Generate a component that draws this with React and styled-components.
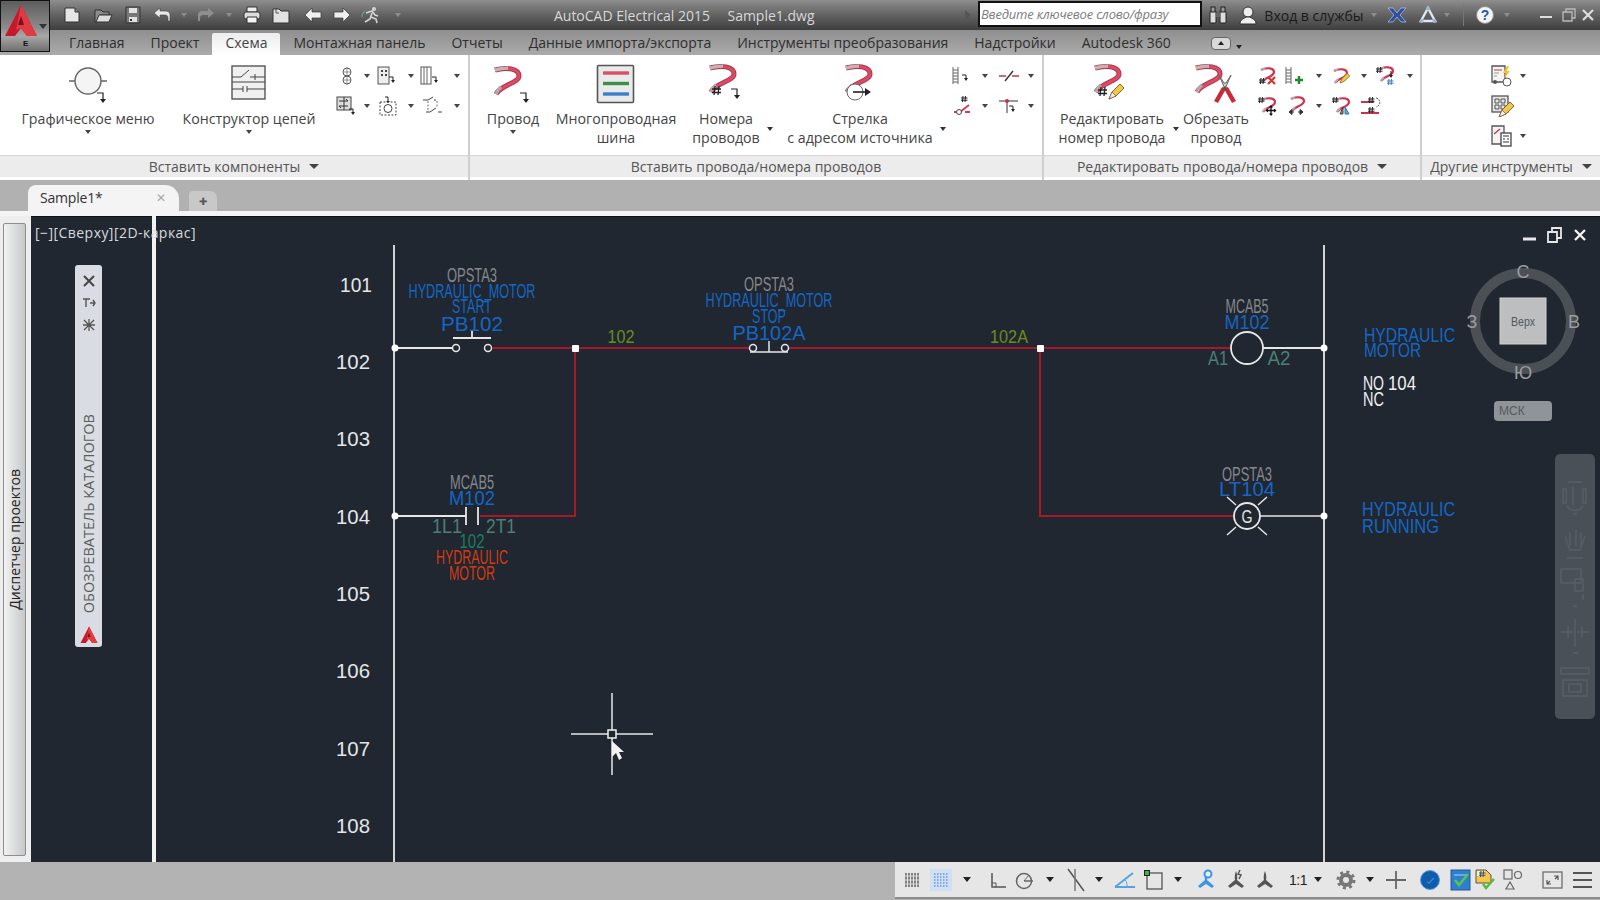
import styled, { createGlobalStyle } from "styled-components";

const GlobalStyle = createGlobalStyle`
  html, body {
    margin: 0;
    padding: 0;
    overflow: hidden;
    background: #b0b0b0;
    font-family: "Open Sans", "Liberation Sans", sans-serif;
  }
`;

// lays items out in flow, each centred on the x it is given
const Track = ({ origin = 0, items, height }) => {
  let cursor = origin;
  return (
    <TrackRow $h={height}>
      {items.map(([x, w, node], i) => {
        const gap = x - w / 2 - cursor;
        cursor = x + w / 2;
        return (
          <Slot key={i} $w={w} $gap={gap}>
            {node}
          </Slot>
        );
      })}
    </TrackRow>
  );
};

const Svg = ({ w = 20, h = 20, children }) => (
  <svg width={w} height={h} viewBox={`0 0 ${w} ${h}`} fill="none">
    {children}
  </svg>
);

/* ---------- quick access icons ---------- */
const QNew = () => (
  <Svg>
    <path d="M3 3h10l4 4v10H3z" fill="#e6e6e6" stroke="#333" />
    <path d="M13 3v4h4" fill="#888" stroke="#333" />
  </Svg>
);
const QOpen = () => (
  <Svg>
    <path d="M2 5h6l2 2h6v3H7l-3 7H2z" fill="#8d8d8d" stroke="#333" />
    <path d="M6 10h13l-3 7H3z" fill="#ddd" stroke="#333" />
  </Svg>
);
const QSave = () => (
  <Svg>
    <path d="M3 2h14v16H3z" fill="#777" stroke="#333" />
    <path d="M6 3h8v5H6z" fill="#e2e2e2" />
    <path d="M6 12h8v5H6z" fill="#e2e2e2" />
    <path d="M7 14h2v2H7z" fill="#333" />
  </Svg>
);
const QUndo = ({ dim }) => (
  <Svg>
    <path
      d="M8 3 2 8l6 5v-3h5c2 0 3 1 3 3v3h2V10c0-3-2-4-5-4H8z"
      fill={dim ? "#8e8e8e" : "#e8e8e8"}
      stroke="#444"
      strokeWidth=".6"
    />
  </Svg>
);
const QRedo = () => (
  <Svg>
    <path
      d="M12 3l6 5-6 5v-3H7c-2 0-3 1-3 3v3H2V10c0-3 2-4 5-4h5z"
      fill="#8e8e8e"
    />
  </Svg>
);
const QPrint = () => (
  <Svg>
    <path d="M5 2h10v5H5z" fill="#eee" stroke="#333" />
    <rect x="2" y="7" width="16" height="7" rx="2" fill="#ddd" stroke="#333" />
    <path d="M5 12h10v6H5z" fill="#f3f3f3" stroke="#333" />
  </Svg>
);
const QSheet = () => (
  <Svg>
    <path d="M2 4h6l2 2h8v12H2z" fill="#e2e2e2" stroke="#333" />
    <path d="M5 4v4h3" stroke="#555" />
  </Svg>
);
const QArrow = ({ flip }) => (
  <Svg>
    <path
      d={flip ? "M18 10l-7-7v4H2v6h9v4z" : "M2 10l7-7v4h9v6H9v4z"}
      fill="#efefef"
      stroke="#333"
      strokeWidth=".7"
    />
  </Svg>
);
const QRun = () => (
  <Svg>
    <circle cx="13" cy="4" r="2" fill="#d5d5d5" />
    <path d="M5 8l6-2 3 4 3 1M11 8l-2 6-5 3M10 12l5 2 1 4" stroke="#d5d5d5" strokeWidth="1.6" />
    <path d="M1 12a7 7 0 0 1 3-6" stroke="#5c9a7a" strokeWidth="1.5" />
  </Svg>
);

/* ---------- right side of title bar ---------- */
const Binoculars = () => (
  <Svg>
    <rect x="2" y="6" width="6" height="12" rx="1" fill="#ddd" stroke="#222" />
    <rect x="12" y="6" width="6" height="12" rx="1" fill="#ddd" stroke="#222" />
    <rect x="3" y="2" width="4" height="5" fill="#999" stroke="#222" />
    <rect x="13" y="2" width="4" height="5" fill="#999" stroke="#222" />
    <rect x="8" y="8" width="4" height="4" fill="#666" />
  </Svg>
);
const User = () => (
  <Svg>
    <circle cx="10" cy="7" r="5" fill="#eee" stroke="#333" />
    <path d="M2 19c0-5 4-5 6-7h4c2 2 6 2 6 7z" fill="#eee" stroke="#333" />
  </Svg>
);
const XLogo = () => (
  <Svg>
    <path d="M1 3h5l4 5 4-5h5l-6 7 6 7h-5l-4-5-4 5H1l6-7z" fill="#2d4f9e" stroke="#b8c7e6" strokeWidth=".7" />
  </Svg>
);
const A360 = () => (
  <Svg>
    <path d="M10 3l7 13H3z" stroke="#dfe6ee" strokeWidth="2.4" />
    <circle cx="10" cy="3.5" r="2" fill="#9fb4ce" />
    <circle cx="3.5" cy="16" r="2" fill="#9fb4ce" />
    <circle cx="16.5" cy="16" r="2" fill="#9fb4ce" />
  </Svg>
);

/* ---------- ribbon helpers ---------- */
const BentArrow = ({ x, y }) => (
  <g transform={`translate(${x} ${y})`}>
    <path d="M0 0h6v6" stroke="#222" strokeWidth="1.2" />
    <path d="M3 6h6L6 10z" fill="#222" />
  </g>
);

const wireBig = "M3 4C13 1 27 2 27 10C27 17 9 19 4 28";

const BigWire = () => (
  <g>
    <path d={wireBig} stroke="#a83a4d" strokeWidth="5" />
    <path d={wireBig} stroke="#dd4a66" strokeWidth="3" />
    <path d="M3 4C8 2.6 12 2 16 2.2" stroke="#c8b0b5" strokeWidth="3.4" />
    <path d="M9 21C6 23 5 26 4 28" stroke="#b9a6aa" strokeWidth="3.4" />
  </g>
);

const GraphicMenuIcon = () => (
  <Svg w={44} h={42}>
    <circle cx="22" cy="18" r="13" fill="#f4f4f4" stroke="#666" strokeWidth="1.4" />
    <path d="M3 18h6M35 18h6" stroke="#666" strokeWidth="1.4" />
    <BentArrow x={31} y={30} />
  </Svg>
);
const CircuitIcon = () => (
  <Svg w={36} h={38}>
    <rect x="1" y="1" width="33" height="33" fill="#f0f0f0" stroke="#555" strokeWidth="1.4" />
    <path d="M1 12h9l8-7M19 12h15M24 9v6M1 24h11M12 21v6M16 21v6M16 24h18M1 17h33" stroke="#444" />
  </Svg>
);
const WireIcon = () => (
  <Svg w={40} h={42}>
    <g transform="translate(-1 3)">
      <BigWire />
    </g>
    <BentArrow x={27} y={30} />
  </Svg>
);
const BusIcon = () => (
  <Svg w={40} h={40}>
    <rect x="1.5" y="1.5" width="36" height="37" rx="1" fill="#eaeaea" stroke="#555" strokeWidth="1.6" />
    <path d="M7 9h26" stroke="#d9506a" strokeWidth="3.4" />
    <path d="M7 19.5h26" stroke="#3c8f46" strokeWidth="3.4" />
    <path d="M7 30h26" stroke="#3b7ec9" strokeWidth="3.4" />
  </Svg>
);
const Hash = ({ x, y, c = "#222" }) => (
  <g transform={`translate(${x} ${y})`} stroke={c} strokeWidth="1.3">
    <path d="M3 0 2 9M7 0 6 9M0 3h9M0 6.500h9" />
  </g>
);
const NumberIcon = () => (
  <Svg w={46} h={42}>
    <g transform="translate(4 1)">
      <BigWire />
    </g>
    <Hash x={9} y={23} />
    <BentArrow x={28} y={26} />
  </Svg>
);
const SourceIcon = () => (
  <Svg w={46} h={42}>
    <g transform="translate(6 1)">
      <BigWire />
    </g>
    <circle cx="18" cy="29" r="8" fill="#fff" stroke="#666" />
    <path d="M16 29h14" stroke="#222" strokeWidth="1.6" />
    <path d="M28 25l6 4-6 4z" fill="#222" />
  </Svg>
);
const Pencil = ({ x, y }) => (
  <g transform={`translate(${x} ${y})`}>
    <path d="M0 14 3 7 11-1l4 4-8 8z" fill="#f1c84b" stroke="#5d4a16" strokeWidth=".8" />
    <path d="M0 14l3-7 4 4z" fill="#eee" stroke="#5d4a16" strokeWidth=".6" />
  </g>
);
const EditNumberIcon = () => (
  <Svg w={46} h={42}>
    <g transform="translate(3 1)">
      <BigWire />
    </g>
    <Hash x={9} y={24} />
    <Pencil x={20} y={22} />
  </Svg>
);
const TrimIcon = () => (
  <Svg w={46} h={42}>
    <g transform="translate(0 1)">
      <BigWire />
    </g>
    <path d="M26 12l6 14 6-14-5 8h-2z" fill="#cfcfcf" stroke="#666" />
    <path d="M31 25l-8 14M33 25l8 14" stroke="#c72b35" strokeWidth="4.500" />
    <circle cx="32" cy="25" r="1.800" fill="#555" />
  </Svg>
);

const miniWire = "M2 4C7 1 15 2 15 6C15 11 6 11 3 16";
const MiniWire = ({ x = 0, y = 0 }) => (
  <g transform={`translate(${x} ${y})`}>
    <path d={miniWire} stroke="#cf3553" strokeWidth="2.2" />
    <path d="M2 4 6 2.500M6 12 3 16" stroke="#b9a6aa" strokeWidth="2" />
  </g>
);
const MiniHash = ({ x, y, c = "#222" }) => (
  <g transform={`translate(${x} ${y})`} stroke={c} strokeWidth="1">
    <path d="M2 0 1.500 6M4.500 0 4 6M0 2h6.500M0 4.200h6.500" />
  </g>
);
const SmallArrow = ({ x, y }) => (
  <g transform={`translate(${x} ${y})`}>
    <path d="M0 0h4v3" stroke="#222" />
    <path d="M2 3h4L4 6z" fill="#222" />
  </g>
);
const Ladder = ({ x = 0 }) => (
  <g transform={`translate(${x} 0)`} stroke="#666">
    <path d="M2 1v17M7 1v17M2 4h5M2 7h5M2 10h5M2 13h5M2 16h5" />
  </g>
);

const S1 = () => (
  <Svg>
    <circle cx="10" cy="6" r="4" stroke="#555" />
    <circle cx="10" cy="14" r="4" stroke="#555" />
    <path d="M10 1v18M7 6h6M7 14h6" stroke="#777" strokeWidth=".8" />
  </Svg>
);
const S2 = () => (
  <Svg w={22}>
    <rect x="2" y="1" width="11" height="17" fill="#eee" stroke="#555" />
    <path d="M5 4h2v2H5zM9 4h2v2H9zM5 8h2v2H5zM9 8h2v2H9z" fill="#444" />
    <SmallArrow x={13} y={11} />
  </Svg>
);
const S3 = () => (
  <Svg w={22}>
    <rect x="2" y="1" width="10" height="17" fill="#fff" stroke="#555" />
    <path d="M5 1v17M8 1v17" stroke="#666" />
    <SmallArrow x={13} y={11} />
  </Svg>
);
const S4 = () => (
  <Svg w={22}>
    <rect x="1" y="1" width="14" height="13" fill="#ddd" stroke="#444" />
    <path d="M3 5h9M12 5l-2-2M3 10h9M3 10l2 2M8 1v13" stroke="#333" />
    <SmallArrow x={13} y={13} />
  </Svg>
);
const S5 = () => (
  <Svg w={22}>
    <rect x="2" y="6" width="16" height="13" stroke="#444" strokeDasharray="2 1.500" />
    <circle cx="10" cy="12.500" r="4" stroke="#444" />
    <path d="M7 1h3v4" stroke="#222" />
    <path d="M8 5h4l-2 2z" fill="#222" />
  </Svg>
);
const S6 = () => (
  <Svg w={22}>
    <path d="M1 4h5l5-3M12 4h2M4 16h4l6-4M16 16h4" stroke="#444" />
    <path d="M6 5v9" stroke="#777" strokeDasharray="2 1.500" />
    <path d="M15 5v7" stroke="#777" strokeDasharray="2 1.500" />
  </Svg>
);
const S7 = () => (
  <Svg w={22}>
    <Ladder />
    <SmallArrow x={11} y={9} />
  </Svg>
);
const S8 = () => (
  <Svg w={22}>
    <path d="M1 10h7M14 10h7" stroke="#c8324c" strokeWidth="1.6" />
    <path d="M7 15 15 5" stroke="#333" strokeWidth="1.4" />
  </Svg>
);
const S9 = () => (
  <Svg w={22}>
    <MiniHash x={8} y={0} />
    <path d="M1 16h6l9-7M12 16h5" stroke="#d23b55" strokeWidth="1.8" />
    <circle cx="6" cy="16" r="2.500" fill="#fff" stroke="#444" />
  </Svg>
);
const S10 = () => (
  <Svg w={22}>
    <path d="M1 5h19" stroke="#333" />
    <path d="M9 5v12" stroke="#333" />
    <circle cx="9" cy="5" r="2" fill="#c8324c" />
    <SmallArrow x={11} y={10} />
  </Svg>
);
const W1 = () => (
  <Svg w={22}>
    <MiniWire x={2} />
    <MiniHash x={2} y={12} />
    <path d="M11 11l7 7M18 11l-7 7" stroke="#d8342f" strokeWidth="2.200" />
  </Svg>
);
const W2 = () => (
  <Svg w={24}>
    <Ladder />
    <path d="M15 10v8M11 14h8" stroke="#1f8a2e" strokeWidth="2.400" />
  </Svg>
);
const W3 = () => (
  <Svg w={22}>
    <MiniWire x={1} y={1} />
    <g transform="translate(9 8)scale(.65)">
      <path d="M0 14 3 7 11-1l4 4-8 8z" fill="#f1c84b" stroke="#5d4a16" />
    </g>
  </Svg>
);
const W4 = () => (
  <Svg w={24}>
    <MiniWire x={3} y={-1} />
    <MiniHash x={1} y={1} />
    <MiniHash x={12} y={13} c="#3d7eb8" />
    <path d="M16 5v5" stroke="#222" />
    <path d="M14 9h4l-2 3z" fill="#222" />
  </Svg>
);
const W5 = () => (
  <Svg w={22}>
    <MiniWire x={3} />
    <MiniHash x={1} y={1} />
    <path d="M14 10v9M9.500 14.500h9" stroke="#111" strokeWidth="1.300" />
    <path d="M14 9l-2 2.500h4zM14 20l-2-2.500h4zM8.500 14.500l2.500-2v4zM19.500 14.500l-2.500-2v4z" fill="#111" />
  </Svg>
);
const W6 = () => (
  <Svg w={24}>
    <MiniWire x={3} y={-1} />
    <path d="M3 16h5M3 16l3-2.500v5zM12 16h5M17 16l-3-2.500v5z" fill="#333" stroke="#333" />
  </Svg>
);
const W7 = () => (
  <Svg w={22}>
    <MiniWire x={3} />
    <MiniHash x={1} y={1} />
    <path d="M9 18l3-7v7z" fill="#888" stroke="#444" />
    <path d="M14 11v7h4z" fill="#5fa8dc" stroke="#2c77b0" />
  </Svg>
);
const W8 = () => (
  <Svg w={24}>
    <path d="M1 6h13M1 17h18" stroke="#c8324c" strokeWidth="1.800" />
    <MiniHash x={8} y={1} />
    <MiniHash x={8} y={11} />
    <path d="M16 2c5 1 5 8 0 9" stroke="#555" strokeDasharray="2 1" />
  </Svg>
);
const O1 = () => (
  <Svg w={24} h={22}>
    <path d="M2 1h13v16H2z" fill="#f4f4f4" stroke="#555" strokeWidth="1.300" />
    <path d="M4 5h8" stroke="#c8324c" />
    <path d="M4 8h5M4 11h3" stroke="#999" />
    <path d="M17 1l-4 7h3l-2 6 6-8h-3l2-5z" fill="#f2c230" />
    <circle cx="17" cy="17" r="4" fill="#fff" stroke="#555" />
    <circle cx="5" cy="17" r="2" fill="#555" />
  </Svg>
);
const O2 = () => (
  <Svg w={24} h={22}>
    <rect x="2" y="1" width="16" height="16" fill="#e6e6e6" stroke="#555" strokeWidth="1.300" />
    <path d="M5 4h4v4H5zM11 4h4v4h-4zM5 10h4v4H5zM11 10h4v4h-4z" stroke="#555" />
    <Pencil x={9} y={8} />
  </Svg>
);
const O3 = () => (
  <Svg w={24} h={22}>
    <path d="M2 1h12v18H2z" fill="#f4f4f4" stroke="#555" strokeWidth="1.300" />
    <path d="M4 9 10 4" stroke="#c8324c" strokeWidth="1.400" />
    <rect x="11" y="8" width="10" height="13" fill="#fff" stroke="#444" strokeWidth="1.300" />
    <path d="M13 11h6M13 14h2M17 14h2M13 17h6" stroke="#333" />
  </Svg>
);

/* ---------- status bar icons ---------- */
const Blade = ({ c }) => (
  <g fill={c}>
    <path d="M10 2c1.500 4 1.500 7 1 9l7 6-2 2-6-4-6 4-2-2 7-6c-.500-2-.500-5 1-9z" />
  </g>
);
const StGrid = () => (
  <Svg w={22}>
    <path d="M5 3v14M8 3v14M11 3v14M14 3v14M17 3v14" stroke="#555" strokeWidth="1.400" />
    <path d="M3 6h16M3 10h16M3 14h16" stroke="#ddd" />
  </Svg>
);
const StSnap = () => (
  <SnapBox>
    <Svg w={18} h={18}>
      <path
        d="M2 3h14M2 6h14M2 9h14M2 12h14M2 15h14"
        stroke="#6c95d8"
        strokeWidth="1.400"
        strokeDasharray="1.500 1.500"
      />
    </Svg>
  </SnapBox>
);
const StOrtho = () => (
  <Svg w={22}>
    <path d="M5 3v14h14" stroke="#555" strokeWidth="1.500" />
    <path d="M5 13h4v4" stroke="#555" />
  </Svg>
);
const StPolar = () => (
  <Svg w={22}>
    <circle cx="10" cy="11" r="7.500" stroke="#666" strokeWidth="1.500" />
    <path d="M10 11h9" stroke="#666" strokeWidth="1.500" />
    <path d="M10 11 15 5" stroke="#666" />
  </Svg>
);
const StOsnap = () => (
  <Svg w={24} h={24}>
    <path d="M4 1l16 22" stroke="#555" strokeWidth="1.500" />
    <path d="M11 1v22" stroke="#777" strokeWidth="1.500" />
  </Svg>
);
const StAngle = () => (
  <Svg w={24} h={22}>
    <path d="M2 18h20M2 18 20 4" stroke="#58a2e0" strokeWidth="2" />
    <path d="M12 11c2 2 2 4 2 7" stroke="#58a2e0" />
  </Svg>
);
const StSquare = () => (
  <Svg w={22} h={22}>
    <rect x="4" y="4" width="15" height="16" stroke="#555" strokeWidth="1.300" />
    <rect x="1.500" y="1.500" width="5" height="5" fill="#3cb24a" stroke="#222" />
  </Svg>
);
const StAnno = () => (
  <Svg w={22} h={22}>
    <Blade c="#3d95e6" />
    <circle cx="12" cy="5" r="3.500" fill="#eee" stroke="#3d95e6" strokeWidth="2" />
  </Svg>
);
const StAnno2 = () => (
  <Svg w={22} h={22}>
    <Blade c="#555" />
    <path d="M14 1l-2 4 3 1-2 4" stroke="#555" strokeWidth="1.500" />
  </Svg>
);
const StAnno3 = () => (
  <Svg w={22} h={22}>
    <Blade c="#555" />
  </Svg>
);
const StGear = () => (
  <Svg w={20} h={20}>
    <circle cx="10" cy="10" r="5" stroke="#777" strokeWidth="4" />
    <circle cx="10" cy="10" r="8" stroke="#777" strokeWidth="3" strokeDasharray="3 3.300" />
  </Svg>
);
const StPlus = () => (
  <Svg w={22} h={22}>
    <path d="M11 2v18M1 11h20" stroke="#666" strokeWidth="1.800" />
  </Svg>
);
const StGlobe = () => (
  <Svg w={22} h={22}>
    <circle cx="11" cy="11" r="9.500" fill="#0f5cad" stroke="#5f9bd8" />
    <path d="M8 13l2 1 5-5" stroke="#3f8ad6" strokeWidth="1.200" />
  </Svg>
);
const StCheck = () => (
  <Svg w={22} h={22}>
    <rect x="1" y="1" width="19" height="20" fill="#2f7fd0" stroke="#1f5a9a" />
    <path d="M4 6h12" stroke="#a9d0f2" />
    <path d="M5 11l4 5 9-11" stroke="#5bc24c" strokeWidth="2.600" />
  </Svg>
);
const StDoc = () => (
  <Svg w={22} h={22}>
    <path d="M2 1h10l5 5v8H2z" fill="#f1c84b" stroke="#555" />
    <path d="M3 2h8v5H3z" fill="#eee" />
    <MiniHash x={5} y={2} c="#444" />
    <path d="M9 15l3 4 8-9" stroke="#5bb83c" strokeWidth="2.400" />
  </Svg>
);
const StShapes = () => (
  <Svg w={22} h={22}>
    <rect x="2" y="1" width="8" height="9" stroke="#666" strokeWidth="1.200" />
    <circle cx="16" cy="6" r="3.500" stroke="#666" strokeWidth="1.200" />
    <path d="M8 13l4 7H4z" stroke="#666" strokeWidth="1.200" />
  </Svg>
);
const StExpand = () => (
  <Svg w={22} h={20}>
    <rect x="1" y="2" width="19" height="16" stroke="#777" strokeWidth="1.400" />
    <path d="M5 14l3-3M5 10v4h4M16 6l-3 3M12 6h4v4" stroke="#555" strokeWidth="1.200" />
  </Svg>
);
const StMenu = () => (
  <Svg w={22} h={20}>
    <path d="M1 3h19M1 10h19M1 17h19" stroke="#555" strokeWidth="2" />
  </Svg>
);

/* ---------- the drawing ---------- */
const CadLabel = ({ x, y, w, h = 14, c = "#8d9093", anchor = "middle", children }) => (
  <CadText
    x={x}
    y={y + h / 2}
    fontSize={h / 0.72}
    textAnchor={anchor}
    textLength={w}
    lengthAdjust="spacingAndGlyphs"
    fill={c}
  >
    {children}
  </CadText>
);

const RED = "#a8182b";
const RAIL = "#e6e6e6";
const BLUE = "#1566c4";
const GREY = "#85888c";
const TEAL = "#4c7f76";

const rungs = [
  ["101", 356, 284, 32],
  ["102", 353, 361, 34],
  ["103", 353, 438, 34],
  ["104", 353, 516, 34],
  ["105", 353, 593, 34],
  ["106", 353, 670, 34],
  ["107", 353, 748, 34],
  ["108", 353, 825, 34],
];

const Drawing = () => (
  <DrawingSvg viewBox="31 216 1569 646" width="1569" height="646" fill="none">
    <path d="M394 245V862M1324 245V862" stroke={RAIL} strokeWidth="1.800" />
    {rungs.map(([t, x, y, w]) => (
      <CadLabel key={t} x={x} y={y} w={w} h={15} c="#e4e6e8">
        {t}
      </CadLabel>
    ))}

    <path d="M395 348H452M491 338H453M472 338V331" stroke={RAIL} strokeWidth="1.800" />
    <circle cx="456" cy="348" r="3.500" stroke={RAIL} strokeWidth="1.500" />
    <circle cx="488" cy="348" r="3.500" stroke={RAIL} strokeWidth="1.500" />
    <path d="M492 348H749M789 348H1231M575 348V516H480M1040 348V516H1235" stroke={RED} strokeWidth="2" />
    <circle cx="753" cy="348" r="3.500" stroke={RAIL} strokeWidth="1.500" />
    <circle cx="785" cy="348" r="3.500" stroke={RAIL} strokeWidth="1.500" />
    <path d="M750 352H788M769 341V352" stroke={RAIL} strokeWidth="1.500" />

    <CadLabel x={472} y={274} w={50} h={15} c={GREY}>OPSTA3</CadLabel>
    <CadLabel x={472} y={291} w={127} h={14} c={BLUE}>HYDRAULIC_MOTOR</CadLabel>
    <CadLabel x={472} y={306} w={40} h={14} c={BLUE}>START</CadLabel>
    <CadLabel x={472} y={323} w={62} h={15} c={BLUE}>PB102</CadLabel>
    <CadLabel x={621} y={336} w={27} h={13} c="#6f8a22">102</CadLabel>

    <CadLabel x={769} y={283} w={50} h={15} c={GREY}>OPSTA3</CadLabel>
    <CadLabel x={769} y={300} w={127} h={14} c={BLUE}>HYDRAULIC_MOTOR</CadLabel>
    <CadLabel x={769} y={316} w={34} h={14} c={BLUE}>STOP</CadLabel>
    <CadLabel x={769} y={332} w={73} h={15} c={BLUE}>PB102A</CadLabel>
    <CadLabel x={1009} y={336} w={38} h={13} c="#6f8a22">102A</CadLabel>

    <path d="M395 516H466M466 507V525M478 507V525" stroke={RAIL} strokeWidth="1.800" />
    <CadLabel x={472} y={481} w={44} h={15} c={GREY}>MCAB5</CadLabel>
    <CadLabel x={472} y={497} w={46} h={15} c={BLUE}>M102</CadLabel>
    <CadLabel x={447} y={526} w={30} h={14} c={TEAL}>1L1</CadLabel>
    <CadLabel x={501} y={526} w={30} h={14} c={TEAL}>2T1</CadLabel>
    <CadLabel x={472} y={541} w={25} h={14} c="#1c7a62">102</CadLabel>
    <CadLabel x={472} y={557} w={72} h={14} c="#d33a12">HYDRAULIC</CadLabel>
    <CadLabel x={472} y={573} w={46} h={14} c="#d33a12">MOTOR</CadLabel>

    <circle cx="1247" cy="348" r="16" stroke={RAIL} strokeWidth="1.800" />
    <path d="M1263 348H1324" stroke={RAIL} strokeWidth="1.800" />
    <CadLabel x={1247} y={305} w={43} h={15} c={GREY}>MCAB5</CadLabel>
    <CadLabel x={1247} y={321} w={45} h={15} c={BLUE}>M102</CadLabel>
    <CadLabel x={1218} y={358} w={20} h={14} c={TEAL}>A1</CadLabel>
    <CadLabel x={1279} y={358} w={23} h={14} c={TEAL}>A2</CadLabel>

    <circle cx="1247" cy="516" r="13" stroke={RAIL} strokeWidth="1.800" />
    <path
      d="M1260 516H1324M1227 497L1236 505M1267 497L1258 505M1227 535L1236 527M1267 535L1258 527"
      stroke={RAIL}
      strokeWidth="1.500"
    />
    <CadLabel x={1247} y={516} w={11} h={13} c="#e8e8e8">G</CadLabel>
    <CadLabel x={1247} y={473} w={50} h={15} c={GREY}>OPSTA3</CadLabel>
    <CadLabel x={1247} y={488} w={56} h={15} c={BLUE}>LT104</CadLabel>

    <circle cx="395" cy="348" r="3.500" fill="#fff" />
    <circle cx="395" cy="516" r="3.500" fill="#fff" />
    <circle cx="1324" cy="348" r="3.500" fill="#fff" />
    <circle cx="1324" cy="516" r="3.500" fill="#fff" />
    <rect x="572" y="345" width="7" height="7" rx="1" fill="#fff" />
    <rect x="1037" y="345" width="7" height="7" rx="1" fill="#fff" />

    <CadLabel x={1364} y={335} w={91} h={14} c={BLUE} anchor="start">HYDRAULIC</CadLabel>
    <CadLabel x={1364} y={350} w={57} h={14} c={BLUE} anchor="start">MOTOR</CadLabel>
    <CadLabel x={1363} y={383} w={21} h={14} c="#f0f0f0" anchor="start">NO</CadLabel>
    <CadLabel x={1388} y={383} w={28} h={14} c="#f0f0f0" anchor="start">104</CadLabel>
    <CadLabel x={1363} y={399} w={21} h={14} c="#f0f0f0" anchor="start">NC</CadLabel>
    <CadLabel x={1362} y={509} w={93} h={14} c={BLUE} anchor="start">HYDRAULIC</CadLabel>
    <CadLabel x={1362} y={526} w={77} h={14} c={BLUE} anchor="start">RUNNING</CadLabel>

    {/* crosshair */}
    <path d="M571 734H608M616 734H653M612 693V730M612 738V775" stroke="#e4e6e8" strokeWidth="1.500" />
    <rect x="608" y="730" width="8" height="8" stroke="#f2f2f2" strokeWidth="1.500" />
    <path d="M612 741V757L616 753L619 760L622 758L619 752H624Z" fill="#f2f2f2" />
  </DrawingSvg>
);

const ViewCube = () => (
  <CubeSvg viewBox="0 0 124 124" width="124" height="124" fill="none">
    <circle cx="62" cy="62" r="48" stroke="#4b5056" strokeWidth="10" />
    <rect x="39" y="39" width="46" height="46" fill="#bcbec0" stroke="#d0d1d2" />
    <CubeLetter x="62" y="67" fontSize="13" fill="#55585c" textLength="24" lengthAdjust="spacingAndGlyphs">Верх</CubeLetter>
    <CubeLetter x="62" y="19" fontSize="18" fill="#9a9da0">С</CubeLetter>
    <CubeLetter x="11" y="69" fontSize="18" fill="#9a9da0">З</CubeLetter>
    <CubeLetter x="113" y="69" fontSize="18" fill="#9a9da0">В</CubeLetter>
    <CubeLetter x="62" y="120" fontSize="18" fill="#9a9da0">Ю</CubeLetter>
  </CubeSvg>
);

const NavIcons = () => (
  <svg width="40" height="265" viewBox="0 0 40 265" fill="none" stroke="#565d65" strokeWidth="1.500">
    <path d="M8 35h3v14h-3zM18 33v18M28 35h3v14h-3zM12 52c4 6 12 6 16 0M13 28h14M18 60h4" />
    <path d="M10 82l5 14h10l5-14M15 78v14M21 76v16M26 78v14M12 104h16" />
    <path d="M6 115h20v14H6zM20 125h8v12h-8zM28 140v6M18 152h4" />
    <path d="M20 165v28M6 178h12M22 178h12M13 172v12M27 172v12M18 199h5" />
    <path d="M6 214h28v6H6zM8 226h24v16H8zM14 230h12v8H14z" />
  </svg>
);

const LogoA = ({ size = 34 }) => (
  <svg width={size} height={size} viewBox="0 0 34 34">
    <path d="M17 1 1 32h10l6-8 6 8h10z" fill="#c8192b" />
    <path d="M17 1 12 26l5-2 6 8h10z" fill="#e13a42" />
    <path d="M17 12 14 21h6z" fill="#7d0f1c" />
  </svg>
);

const App = () => (
  <Page>
    <GlobalStyle />
    <AppButton>
      <LogoA />
      <AppCaret />
      <AppLetter>E</AppLetter>
    </AppButton>

    <TitleBar>
      <Track
        items={[
          [72, 20, <QNew />],
          [103, 20, <QOpen />],
          [133, 20, <QSave />],
          [162, 20, <QUndo />],
          [184, 6, <MiniDot />],
          [206, 20, <QRedo />],
          [229, 6, <MiniDot />],
          [252, 20, <QPrint />],
          [281, 20, <QSheet />],
          [313, 20, <QArrow />],
          [342, 20, <QArrow flip />],
          [371, 20, <QRun />],
          [398, 8, <MiniDot />],
          [632, 170, <TitleText>AutoCAD Electrical 2015</TitleText>],
          [771, 92, <TitleText>Sample1.dwg</TitleText>],
          [968, 6, <TitleArrow />],
          [1090, 224, <SearchBox>Введите ключевое слово/фразу</SearchBox>],
          [1218, 20, <Binoculars />],
          [1248, 20, <User />],
          [1314, 104, <LoginText>Вход в службы</LoginText>],
          [1374, 6, <MiniDot />],
          [1397, 20, <XLogo />],
          [1428, 20, <A360 />],
          [1447, 6, <MiniDot />],
          [1463, 2, <TitleSeparator />],
          [1485, 20, <HelpBall>?</HelpBall>],
          [1507, 6, <MiniDot />],
          [1546, 14, <WinGlyph><path d="M1 9h12" stroke="#ddd" strokeWidth="2" /></WinGlyph>],
          [1569, 14, <WinGlyph><path d="M1 4h9v9H1zM4 4V1h9v9h-3" stroke="#bbb" strokeWidth="1.300" /></WinGlyph>],
          [1588, 14, <WinGlyph><path d="M2 2l10 10M12 2 2 12" stroke="#ddd" strokeWidth="2.200" /></WinGlyph>],
        ]}
      />
    </TitleBar>

    <TabBar>
      <Tab>Главная</Tab>
      <Tab>Проект</Tab>
      <Tab $active>Схема</Tab>
      <Tab>Монтажная панель</Tab>
      <Tab>Отчеты</Tab>
      <Tab>Данные импорта/экспорта</Tab>
      <Tab>Инструменты преобразования</Tab>
      <Tab>Надстройки</Tab>
      <Tab>Autodesk 360</Tab>
      <RibbonPill>
        <PillArrow />
      </RibbonPill>
      <TabCaret />
    </TabBar>

    <Ribbon>
      <Panel>
        <PanelBody>
          <Track
            items={[
              [88, 140, <LargeButton icon={<GraphicMenuIcon />} lines={["Графическое меню"]} caret="under" />],
              [249, 136, <LargeButton icon={<CircuitIcon />} lines={["Конструктор цепей"]} caret="under" />],
              [
                401,
                132,
                <SmallTools
                  origin={335}
                  rows={[
                    [[347, 20, <S1 />], [367, 6, <MiniCaret />], [387, 22, <S2 />], [411, 6, <MiniCaret />], [430, 22, <S3 />], [457, 6, <MiniCaret />]],
                    [[347, 22, <S4 />], [367, 6, <MiniCaret />], [389, 22, <S5 />], [411, 6, <MiniCaret />], [433, 22, <S6 />], [457, 6, <MiniCaret />]],
                  ]}
                />,
              ],
            ]}
          />
        </PanelBody>
        <PanelBand>
          Вставить компоненты <BandCaret />
        </PanelBand>
      </Panel>

      <Panel>
        <PanelBody>
          <Track
            origin={470}
            items={[
              [513, 60, <LargeButton icon={<WireIcon />} lines={["Провод"]} caret="under" />],
              [616, 130, <LargeButton icon={<BusIcon />} lines={["Многопроводная", "шина"]} />],
              [726, 90, <LargeButton icon={<NumberIcon />} lines={["Номера", "проводов"]} caret={41} />],
              [860, 170, <LargeButton icon={<SourceIcon />} lines={["Стрелка", "с адресом источника"]} caret={80} />],
              [
                995,
                80,
                <SmallTools
                  origin={955}
                  rows={[
                    [[962, 22, <S7 />], [985, 6, <MiniCaret />], [1009, 22, <S8 />], [1031, 6, <MiniCaret />]],
                    [[964, 22, <S9 />], [985, 6, <MiniCaret />], [1009, 22, <S10 />], [1031, 6, <MiniCaret />]],
                  ]}
                />,
              ],
            ]}
          />
        </PanelBody>
        <PanelBand>Вставить провода/номера проводов</PanelBand>
      </Panel>

      <Panel>
        <PanelBody>
          <Track
            origin={1044}
            items={[
              [1112, 130, <LargeButton icon={<EditNumberIcon />} lines={["Редактировать", "номер провода"]} caret={61} />],
              [1216, 76, <LargeButton icon={<TrimIcon />} lines={["Обрезать", "провод"]} />],
              [
                1340,
                160,
                <SmallTools
                  origin={1260}
                  rows={[
                    [[1268, 22, <W1 />], [1296, 24, <W2 />], [1319, 6, <MiniCaret />], [1342, 22, <W3 />], [1364, 6, <MiniCaret />], [1387, 24, <W4 />], [1410, 6, <MiniCaret />]],
                    [[1268, 22, <W5 />], [1298, 24, <W6 />], [1319, 6, <MiniCaret />], [1342, 22, <W7 />], [1372, 24, <W8 />]],
                  ]}
                />,
              ],
            ]}
          />
        </PanelBody>
        <PanelBand>
          Редактировать провода/номера проводов <BandCaret />
        </PanelBand>
      </Panel>

      <Panel>
        <PanelBody>
          <OtherTools>
            <OtherRow>
              <O1 />
              <MiniCaret />
            </OtherRow>
            <OtherRow>
              <O2 />
            </OtherRow>
            <OtherRow>
              <O3 />
              <MiniCaret />
            </OtherRow>
          </OtherTools>
        </PanelBody>
        <PanelBand>
          Другие инструменты <BandCaret />
        </PanelBand>
      </Panel>
    </Ribbon>

    <DocStrip>
      <DocTab>
        Sample1*
        <DocClose>✕</DocClose>
      </DocTab>
      <NewTab>✚</NewTab>
    </DocStrip>

    <Main>
      <SideStrip>
        <SidePalette>
          <VerticalText $size={14} $color="#222">Диспетчер проектов</VerticalText>
        </SidePalette>
      </SideStrip>
      <Canvas>
        <Drawing />
        <SplitLine />
        <ViewLabel>[−][Сверху][2D-каркас]</ViewLabel>
        <CatalogPalette>
          <CatalogTool>
            <Svg w={14} h={14}>
              <path d="M2 2l10 10M12 2 2 12" stroke="#444" strokeWidth="2" />
            </Svg>
          </CatalogTool>
          <CatalogTool>
            <Svg w={14} h={14}>
              <path d="M1 3h7M4 3v8M8 7h5M11 4l2 3-2 3" stroke="#555" strokeWidth="1.400" />
            </Svg>
          </CatalogTool>
          <CatalogTool>
            <Svg w={14} h={14}>
              <path d="M2 2l10 10M12 2 2 12M7 1v12M1 7h12" stroke="#555" strokeWidth="1.300" />
            </Svg>
          </CatalogTool>
          <CatalogTitle>
            <VerticalText $size={14.5} $color="#5c5c5c">ОБОЗРЕВАТЕЛЬ КАТАЛОГОВ</VerticalText>
          </CatalogTitle>
          <LogoA size={18} />
        </CatalogPalette>
        <ViewportButtons>
          <Svg w={16} h={16}>
            <path d="M1 12h13" stroke="#e8e8e8" strokeWidth="3" />
          </Svg>
          <Svg w={16} h={16}>
            <path d="M1 5h9v10H1zM5 5V1h9v10h-4" stroke="#e8e8e8" strokeWidth="1.800" />
          </Svg>
          <Svg w={16} h={16}>
            <path d="M3 3l10 10M13 3 3 13" stroke="#f0f0f0" strokeWidth="2.400" />
          </Svg>
        </ViewportButtons>
        <ViewCube />
        <WcsButton>МСК</WcsButton>
        <NavBar>
          <NavIcons />
        </NavBar>
      </Canvas>
    </Main>

    <StatusBar>
      <StatusBlank />
      <StatusTools>
        <Track
          origin={895}
          items={[
            [912, 22, <StGrid />],
            [941, 22, <StSnap />],
            [967, 9, <StatusCaret />],
            [998, 22, <StOrtho />],
            [1025, 22, <StPolar />],
            [1050, 9, <StatusCaret />],
            [1076, 24, <StOsnap />],
            [1099, 9, <StatusCaret />],
            [1125, 24, <StAngle />],
            [1154, 22, <StSquare />],
            [1178, 9, <StatusCaret />],
            [1207, 22, <StAnno />],
            [1237, 22, <StAnno2 />],
            [1266, 22, <StAnno3 />],
            [1298, 24, <ScaleText>1:1</ScaleText>],
            [1318, 9, <StatusCaret />],
            [1346, 20, <StGear />],
            [1370, 9, <StatusCaret />],
            [1396, 22, <StPlus />],
            [1430, 22, <StGlobe />],
            [1461, 22, <StCheck />],
            [1485, 22, <StDoc />],
            [1513, 22, <StShapes />],
            [1553, 22, <StExpand />],
            [1583, 22, <StMenu />],
          ]}
        />
      </StatusTools>
    </StatusBar>
  </Page>
);

const LargeButton = ({ icon, lines, caret }) => (
  <BigButton>
    <BigIcon>{icon}</BigIcon>
    {lines.map((l) => (
      <BigLabel key={l}>{l}</BigLabel>
    ))}
    {caret === "under" && <UnderCaret />}
    {typeof caret === "number" && <SideCaret style={{ left: `calc(50% + ${caret}px)` }} />}
  </BigButton>
);

const SmallTools = ({ origin, rows }) => (
  <SmallGrid>
    {rows.map((items, i) => (
      <Track key={i} origin={origin} items={items} height={30} />
    ))}
  </SmallGrid>
);

const Page = styled.div`
  position: relative;
  width: 1600px;
  height: 900px;
  overflow: hidden;
  display: flex;
  flex-direction: column;
`;

const TrackRow = styled.div`
  display: flex;
  align-items: ${(p) => (p.$h ? "center" : "flex-start")};
  height: ${(p) => (p.$h ? `${p.$h}px` : "auto")};
`;

const Slot = styled.div`
  position: relative;
  flex: none;
  width: ${(p) => p.$w}px;
  margin-left: ${(p) => p.$gap}px;
  display: flex;
  justify-content: center;
  align-items: center;
`;

const AppButton = styled.div`
  position: absolute;
  left: 0;
  top: 0;
  z-index: 3;
  width: 50px;
  height: 52px;
  box-sizing: border-box;
  border: 1px solid #111;
  background: linear-gradient(#5d5d5d, #8d8d8d 55%, #a8a8a8 70%, #6f6f6f);
  display: flex;
  justify-content: center;
  padding: 3px 8px 0 0;
`;

const AppCaret = styled.span`
  position: absolute;
  right: 2px;
  top: 23px;
  border: 4px solid transparent;
  border-top: 5px solid #333;
`;

const AppLetter = styled.span`
  position: absolute;
  left: 22px;
  bottom: 3px;
  font: bold 8px "Liberation Sans", sans-serif;
  color: #111;
`;

const TitleBar = styled.div`
  height: 30px;
  flex: none;
  background: linear-gradient(#8e8e8e, #666 45%, #3e3e3e);
  overflow: hidden;

  & > div {
    height: 30px;
    align-items: center;
  }
`;

const MiniDot = styled.span`
  width: 0;
  height: 0;
  border: 3px solid transparent;
  border-top: 4px solid #8d8d8d;
  margin-top: 3px;
`;

const TitleText = styled.span`
  font-size: 14px;
  color: #d8d8d8;
  white-space: nowrap;
`;

const TitleArrow = styled.span`
  width: 0;
  height: 0;
  border: 5px solid transparent;
  border-left: 6px solid #555;
  margin-left: 5px;
`;

const SearchBox = styled.div`
  width: 100%;
  height: 26px;
  margin-top: -3px;
  box-sizing: border-box;
  background: #fff;
  border: 2px solid #111;
  padding-left: 1px;
  font-size: 13px;
  line-height: 22px;
  font-style: italic;
  color: #7d7d7d;
  white-space: nowrap;
  overflow: hidden;
  letter-spacing: -0.2px;
`;

const LoginText = styled.span`
  font-size: 14px;
  color: #1a1a1a;
  white-space: nowrap;
`;

const TitleSeparator = styled.span`
  width: 1px;
  height: 22px;
  background: #777;
`;

const HelpBall = styled.span`
  width: 18px;
  height: 18px;
  border-radius: 50%;
  background: #f4f4f4;
  border: 1px solid #888;
  box-sizing: border-box;
  font: bold 14px/16px "Liberation Sans", sans-serif;
  color: #2456a6;
  text-align: center;
`;

const WinGlyph = styled.svg.attrs({ width: 14, height: 14, viewBox: "0 0 14 14", fill: "none" })``;

const TabBar = styled.div`
  position: relative;
  height: 25px;
  flex: none;
  box-sizing: border-box;
  padding-left: 56px;
  background: linear-gradient(#8f8f8f, #ababab);
  display: flex;
  align-items: flex-end;
`;

const Tab = styled.div`
  height: ${(p) => (p.$active ? "22px" : "25px")};
  box-sizing: border-box;
  padding: 0 13px;
  line-height: ${(p) => (p.$active ? "20px" : "26px")};
  font-size: 14px;
  white-space: nowrap;
  color: ${(p) => (p.$active ? "#444" : "#2e2e2e")};
  background: ${(p) => (p.$active ? "linear-gradient(#ececec, #fff)" : "transparent")};
  border-radius: ${(p) => (p.$active ? "2px 2px 0 0" : "0")};
`;

const RibbonPill = styled.div`
  margin: 0 0 5px 27px;
  width: 20px;
  height: 13px;
  border-radius: 4px;
  background: #d9d9d9;
  border: 1px solid #666;
  box-sizing: border-box;
  display: flex;
  justify-content: center;
  align-items: center;
`;

const PillArrow = styled.span`
  border: 3px solid transparent;
  border-bottom: 4px solid #222;
  margin-top: -4px;
`;

const TabCaret = styled.span`
  margin: 0 0 6px 5px;
  border: 3px solid transparent;
  border-top: 4px solid #222;
  height: 0;
  transform: translateY(3px);
`;

const Ribbon = styled.div`
  height: 125px;
  flex: none;
  display: grid;
  grid-template-columns: 468px 572px 376px 178px;
  column-gap: 2px;
  background: #cfcfcf;
`;

const Panel = styled.div`
  background: #fff;
  display: flex;
  flex-direction: column;
  padding-bottom: 3px;
`;

const PanelBody = styled.div`
  height: 100px;
  flex: none;
`;

const PanelBand = styled.div`
  flex: 1;
  display: flex;
  justify-content: center;
  align-items: center;
  gap: 9px;
  background: #ececec;
  border-top: 1px solid #d6d6d6;
  font-size: 14px;
  color: #555;
  white-space: nowrap;
`;

const BandCaret = styled.span`
  border: 5px solid transparent;
  border-top: 5px solid #444;
  border-bottom: 0;
`;

const BigButton = styled.div`
  position: relative;
  width: 100%;
  padding-top: 8px;
  display: flex;
  flex-direction: column;
  align-items: center;
`;

const BigIcon = styled.div`
  height: 42px;
  margin-bottom: 4px;
  display: flex;
  justify-content: center;
  align-items: center;
`;

const BigLabel = styled.div`
  font-size: 14.2px;
  line-height: 19px;
  color: #444;
  white-space: nowrap;
`;

const UnderCaret = styled.span`
  margin-top: 2px;
  border: 3px solid transparent;
  border-top: 4px solid #444;
  border-bottom: 0;
`;

const SideCaret = styled.span`
  position: absolute;
  top: 72px;
  border: 3px solid transparent;
  border-top: 4px solid #333;
  border-bottom: 0;
`;

const MiniCaret = styled.span`
  border: 3px solid transparent;
  border-top: 4px solid #444;
  border-bottom: 0;
`;

const SmallGrid = styled.div`
  width: 100%;
  padding-top: 6px;
`;

const OtherTools = styled.div`
  padding: 10px 0 0 68px;
  display: flex;
  flex-direction: column;
  gap: 8px;
`;

const OtherRow = styled.div`
  display: flex;
  align-items: center;
  gap: 6px;
  height: 22px;
`;

const DocStrip = styled.div`
  height: 36px;
  flex: none;
  box-sizing: border-box;
  background: #b1b1b1;
  border-bottom: 5px solid #f4f4f4;
  display: flex;
  align-items: flex-end;
  padding-left: 28px;
  gap: 10px;
`;

const DocTab = styled.div`
  width: 151px;
  height: 26px;
  box-sizing: border-box;
  padding-left: 12px;
  background: #f4f4f4;
  border-radius: 8px 14px 0 0;
  font-size: 14px;
  line-height: 26px;
  color: #333;
  display: flex;
  justify-content: space-between;
  letter-spacing: -0.2px;
`;

const DocClose = styled.span`
  font-size: 12px;
  color: #a8a8a8;
  margin-right: 13px;
`;

const NewTab = styled.div`
  width: 28px;
  height: 20px;
  background: #c8c8c8;
  border-radius: 4px 7px 0 0;
  font-size: 10px;
  line-height: 20px;
  text-align: center;
  color: #555;
`;

const Main = styled.div`
  height: 646px;
  flex: none;
  display: flex;
`;

const SideStrip = styled.div`
  width: 31px;
  flex: none;
  box-sizing: border-box;
  padding: 7px 5px 6px 3px;
  background: #eeeeee;
`;

const SidePalette = styled.div`
  height: 100%;
  box-sizing: border-box;
  background: linear-gradient(90deg, #f2f2f2, #c6c8ca);
  border: 1px solid #8e8e8e;
  border-radius: 2px;
  display: flex;
  justify-content: center;
  align-items: flex-end;
  padding-bottom: 245px;
`;

const VerticalText = styled.span`
  writing-mode: vertical-rl;
  transform: rotate(180deg);
  white-space: nowrap;
  font-size: ${(p) => p.$size}px;
  color: ${(p) => p.$color};
`;

const Canvas = styled.div`
  position: relative;
  flex: 1;
  background: #202730;
  box-shadow: inset 0 1px 0 #111;
  overflow: hidden;
`;

const DrawingSvg = styled.svg`
  display: block;
`;

const CadText = styled.text`
  font-family: "Liberation Sans", sans-serif;
`;

const CubeLetter = styled.text`
  font-family: "Liberation Sans", sans-serif;
  text-anchor: middle;
`;

const SplitLine = styled.div`
  position: absolute;
  left: 121px;
  top: 0;
  bottom: 0;
  width: 4px;
  background: #f2f2f2;
`;

const ViewLabel = styled.div`
  position: absolute;
  left: 4px;
  top: 8px;
  font-size: 14px;
  line-height: 18px;
  color: #d8dade;
  white-space: nowrap;
  letter-spacing: 0.45px;
`;

const CatalogPalette = styled.div`
  position: absolute;
  left: 44px;
  top: 49px;
  width: 27px;
  height: 382px;
  box-sizing: border-box;
  padding: 5px 0 3px;
  background: #d9dce2;
  border-radius: 3px;
  display: flex;
  flex-direction: column;
  align-items: center;
`;

const CatalogTool = styled.div`
  height: 22px;
  display: flex;
  align-items: center;
`;

const CatalogTitle = styled.div`
  flex: 1;
  display: flex;
  align-items: flex-end;
  padding-bottom: 13px;
`;

const ViewportButtons = styled.div`
  position: absolute;
  top: 11px;
  right: 12px;
  display: flex;
  gap: 9px;
`;

const CubeSvg = styled.svg`
  position: absolute;
  left: 1430px;
  top: 43px;
`;

const WcsButton = styled.div`
  position: absolute;
  left: 1463px;
  top: 185px;
  width: 58px;
  height: 20px;
  box-sizing: border-box;
  padding-left: 5px;
  background: #8f9499;
  border-radius: 4px;
  font: 12px/20px "Liberation Sans", sans-serif;
  color: #565a5f;
`;

const NavBar = styled.div`
  position: absolute;
  left: 1524px;
  top: 238px;
  width: 40px;
  height: 265px;
  background: #4a5058;
  border-radius: 5px;
`;

const StatusBar = styled.div`
  flex: 1;
  display: flex;
  background: #b3b3b3;
`;

const StatusBlank = styled.div`
  width: 895px;
  flex: none;
`;

const StatusTools = styled.div`
  flex: 1;
  height: 35px;
  background: #e6e6e6;
  border-bottom: 2px solid #8c8c8c;
  box-sizing: content-box;

  & > div {
    height: 35px;
    align-items: center;
  }
`;

const StatusCaret = styled.span`
  border: 4px solid transparent;
  border-top: 5px solid #222;
  border-bottom: 0;
`;

const ScaleText = styled.span`
  font: 14px "Liberation Sans", sans-serif;
  color: #222;
  letter-spacing: -0.5px;
`;

const SnapBox = styled.span`
  display: flex;
  width: 22px;
  height: 22px;
  align-items: center;
  justify-content: center;
  background: #cfe0f5;
`;

export default App;
